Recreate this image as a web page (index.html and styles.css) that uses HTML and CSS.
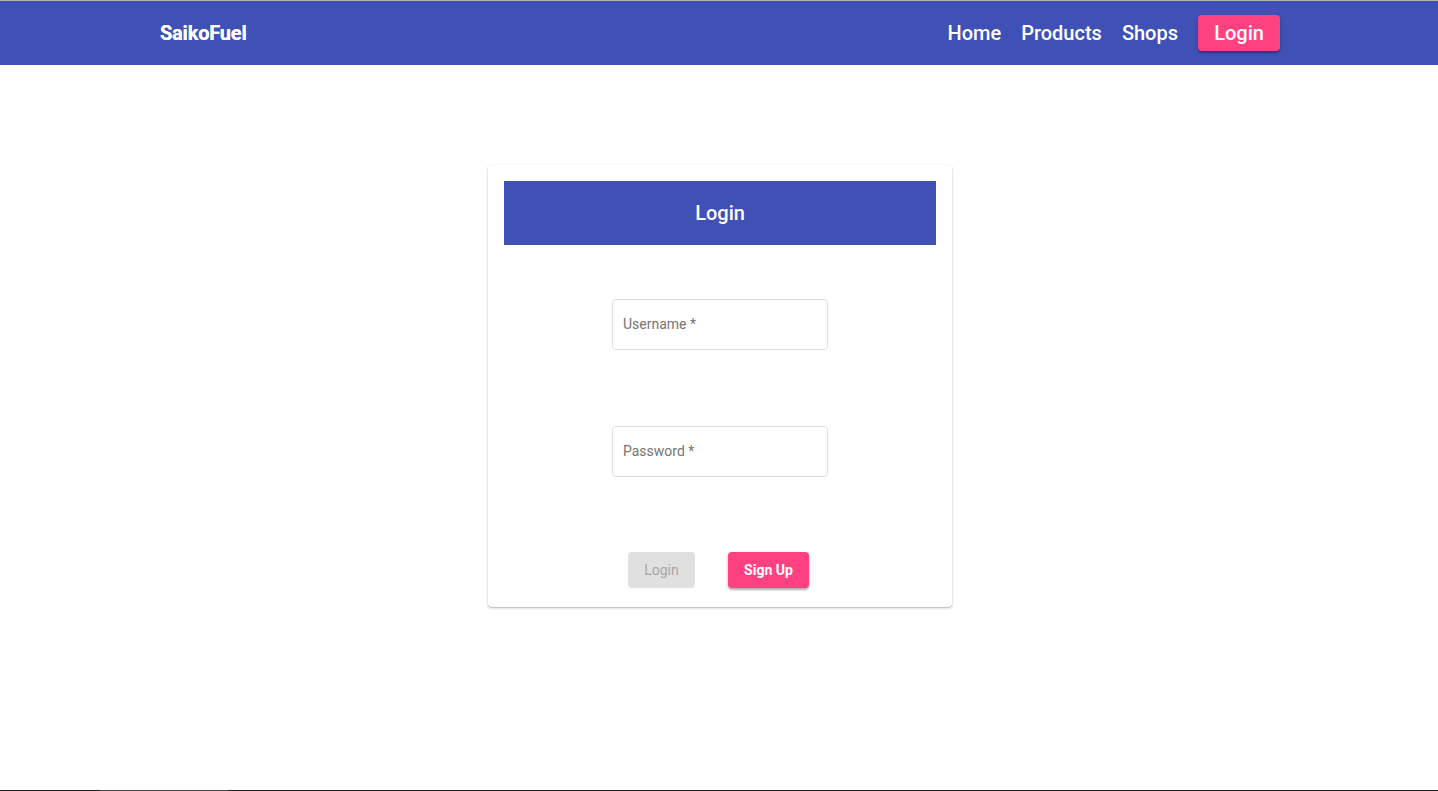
FILE: index.html
```html
<!DOCTYPE html>
<html>
<head>
<meta charset="utf-8">
<link rel="stylesheet" href="styles.css">
</head>
<body>
<div class="page">
  <header class="topbar">
    <div class="topbar-inner">
      <div class="brand">SaikoFuel</div>
      <nav class="nav">
        <a class="nav-link">Home</a>
        <a class="nav-link">Products</a>
        <a class="nav-link">Shops</a>
        <a class="nav-btn">Login</a>
      </nav>
    </div>
  </header>
  <main class="main">
    <section class="card">
      <div class="card-head">Login</div>
      <div class="card-body">
        <div class="field field-first"><span class="field-label">Username *</span></div>
        <div class="field field-second"><span class="field-label">Password *</span></div>
        <div class="actions">
          <button class="btn btn-disabled">Login</button>
          <button class="btn btn-primary">Sign Up</button>
        </div>
      </div>
    </section>
  </main>
  <div class="bottom-line"><span class="seg"></span></div>
</div>
</body>
</html>
```
FILE: styles.css
```css
* { box-sizing: border-box; }
html, body { margin: 0; padding: 0; height: 100%; }
body {
  font-family: Roboto, "Liberation Sans", sans-serif;
  background: #fff;
}
.page {
  min-height: 100vh;
  display: flex;
  flex-direction: column;
  border-top: 1px solid #b4b4b4;
}
.topbar {
  height: 64px;
  background: #3f51b5;
  color: #fff;
}
.topbar-inner {
  width: 1120px;
  margin: 0 auto;
  height: 100%;
  display: flex;
  align-items: center;
  justify-content: space-between;
  padding-left: 0;
  padding-right: 0;
  transform: translateX(1px);
}
.brand {
  font-size: 20px;
  font-weight: 700;
  letter-spacing: -0.2px;
  text-shadow: 0 0 0.6px #fff;
}
.nav {
  display: flex;
  align-items: center;
}
.nav-link {
  font-size: 20px;
  font-weight: 500;
  margin-right: 20px;
}
.nav-btn {
  background: #ff4081;
  height: 36px;
  width: 82px;
  border-radius: 4px;
  display: flex;
  align-items: center;
  justify-content: center;
  font-size: 20px;
  font-weight: 500;
  box-shadow: 0 2px 2px rgba(0,0,0,0.25), 0 1px 4px rgba(0,0,0,0.12);
}
.main {
  flex: 1;
  display: flex;
  justify-content: center;
  align-items: flex-start;
  padding-top: 100px;
  padding-left: 2px;
}
.card {
  width: 464px;
  padding: 16px 16px 19px;
  background: #fff;
  border-radius: 4px;
  box-shadow: 0 1px 3px rgba(0,0,0,0.2), 0 1px 1px rgba(0,0,0,0.12);
}
.card-head {
  height: 64px;
  background: #3f51b5;
  color: #fff;
  display: flex;
  align-items: center;
  justify-content: center;
  font-size: 20px;
  font-weight: 500;
}
.card-body {
  display: flex;
  flex-direction: column;
  align-items: center;
}
.field {
  width: 216px;
  height: 51px;
  border: 1px solid #dcdcdc;
  border-radius: 4px;
  display: flex;
  align-items: center;
  padding-left: 10px;
}
.field-first { margin-top: 54px; }
.field-second { margin-top: 76px; }
.field-label {
  font-size: 14px;
  color: #757575;
  margin-top: -1px;
}
.actions {
  margin-top: 75px;
  display: flex;
  gap: 33px;
  padding-right: 3px;
}
.btn {
  height: 36px;
  border: none;
  border-radius: 4px;
  font-family: Roboto, "Liberation Sans", sans-serif;
  font-size: 14px;
  padding: 0 0 1px;
}
.btn-disabled {
  width: 67px;
  background: #e0e0e0;
  color: #a6a6a6;
  font-weight: 400;
}
.btn-primary {
  width: 81px;
  background: #ff4081;
  color: #fff;
  font-weight: 700;
  box-shadow: 0 2px 2px rgba(0,0,0,0.25), 0 1px 4px rgba(0,0,0,0.12);
}
.bottom-line {
  height: 1px;
  background: #1e1e1e;
  display: flex;
}
.seg {
  margin-left: 100px;
  width: 128px;
  background: #4a4a4a;
}
```
